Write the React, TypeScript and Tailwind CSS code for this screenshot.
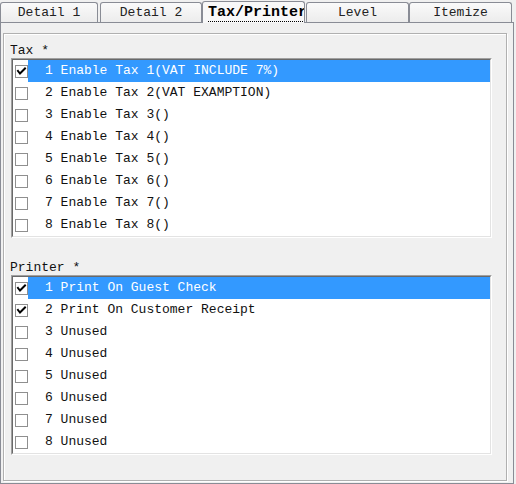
import React from "react";

const mono = { fontFamily: '"Liberation Mono", "Courier New", monospace' };

function Check() {
  return (
    <svg width="13" height="13" viewBox="0 0 13 13" className="block">
      <polyline points="3,6 5,8.5 10,3.5" fill="none" stroke="#000" strokeWidth="2" strokeLinecap="square" />
    </svg>
  );
}

function Row({ text, checked, selected }: { text: string; checked: boolean; selected: boolean }) {
  return (
    <div className="flex h-[22px] items-stretch">
      <div className="flex w-[15px] shrink-0 items-center justify-end bg-white">
        <div className="h-[13px] w-[13px] border border-[#8f8f8f] bg-white">
          {checked && (
            <div className="-m-px">
              <Check />
            </div>
          )}
        </div>
      </div>
      <div
        className={
          "flex flex-1 items-center pl-[17px] text-[13px] whitespace-pre " +
          (selected ? "bg-[#3399ff] text-white" : "bg-white text-[#111]")
        }
      >
        {text}
      </div>
    </div>
  );
}

function ListBox({ rows }: { rows: { text: string; checked: boolean; selected: boolean }[] }) {
  return (
    <div className="w-[481px] border border-[#a0a0a0] border-b-white border-r-white">
      <div className="border border-[#696969] border-b-[#e3e3e3] border-r-[#e3e3e3] bg-white">
        {rows.map((r, i) => (
          <Row key={i} {...r} />
        ))}
      </div>
    </div>
  );
}

function Tab({ label, w, ml }: { label: string; w: string; ml: string }) {
  return (
    <div
      className={
        "flex h-[20px] items-center justify-center rounded-t-[3px] border border-b-0 border-[#898c95] bg-gradient-to-b from-[#fafafa] to-[#ececec] text-[13px] text-[#222] " +
        w +
        " " +
        ml
      }
    >
      {label}
    </div>
  );
}

export default function App() {
  const tax = [
    "1 Enable Tax 1(VAT INCLUDE 7%)",
    "2 Enable Tax 2(VAT EXAMPTION)",
    "3 Enable Tax 3()",
    "4 Enable Tax 4()",
    "5 Enable Tax 5()",
    "6 Enable Tax 6()",
    "7 Enable Tax 7()",
    "8 Enable Tax 8()",
  ].map((t, i) => ({ text: t, checked: i === 0, selected: i === 0 }));
  const printer = [
    "1 Print On Guest Check",
    "2 Print On Customer Receipt",
    "3 Unused",
    "4 Unused",
    "5 Unused",
    "6 Unused",
    "7 Unused",
    "8 Unused",
  ].map((t, i) => ({ text: t, checked: i < 2, selected: i === 0 }));

  return (
    <div className="h-[484px] w-[516px] overflow-hidden bg-[#f0f0f0]" style={mono}>
      <div className="relative z-10 flex h-[22px] items-end">
        <Tab label="Detail 1" w="w-[98px]" ml="ml-0" />
        <Tab label="Detail 2" w="w-[102px]" ml="ml-[2px]" />
        <div className="-mb-px flex h-[22px] w-[103px] items-center overflow-hidden rounded-t-[3px] border border-b-0 border-[#898c95] bg-[#f8f8f8] pl-[5px]">
          <span className="whitespace-pre border-b border-dotted border-black text-[15px] leading-[17px] font-bold text-black">
            Tax/Printer
          </span>
        </div>
        <Tab label="Level" w="w-[103px]" ml="ml-[1px]" />
        <Tab label="Itemize" w="w-[103px]" ml="ml-0" />
      </div>
      <div className="h-[462px] w-[514px] border border-[#898c95]">
        <div className="ml-[2px] mt-[10px] h-[448px] w-[504px] border border-[#b0b0b0] pl-[7px] shadow-[1px_1px_0_#ffffff,inset_1px_1px_0_#ffffff]">
          <div className="-ml-[1px] mt-[9px] h-[15px] text-[13px] leading-[15px] text-[#111]">Tax *</div>
          <ListBox rows={tax} />
          <div className="-ml-[1px] mt-[22px] h-[15px] text-[13px] leading-[15px] text-[#111]">Printer *</div>
          <ListBox rows={printer} />
        </div>
      </div>
    </div>
  );
}
